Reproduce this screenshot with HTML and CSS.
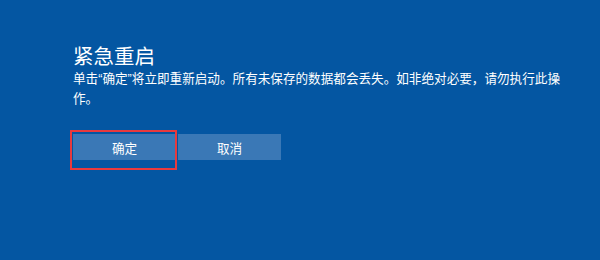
FILE: index.html
```html
<!DOCTYPE html>
<html lang="zh-CN">
<head>
<meta charset="utf-8">
<link rel="stylesheet" href="styles.css">
</head>
<body>
<div class="dialog">
  <h1 class="title">紧急重启</h1>
  <p class="message">单击<span class="q">“</span>确定<span class="q">”</span>将立即重新启动。所有未保存的数据都会丢失。如非绝对必要，请勿执行此操作。</p>
  <div class="actions">
    <div class="btn-wrap">
      <button class="btn">确定</button>
      <span class="highlight"></span>
    </div>
    <button class="btn">取消</button>
  </div>
</div>
</body>
</html>
```

FILE: styles.css
```css
html, body {
  margin: 0;
  padding: 0;
}
body {
  width: 600px;
  height: 260px;
  background: #0456a2;
  font-family: "Noto Sans CJK SC", "Noto Sans", sans-serif;
  color: #ffffff;
  overflow: hidden;
}
.dialog {
  padding: 41px 0 0 73px;
  width: 496px;
}
.title {
  margin: 0;
  font-size: 20.5px;
  font-weight: 400;
  line-height: 28px;
}
.message {
  margin: 0;
  font-size: 12.6px;
  line-height: 17.5px;
}
.q {
  font-family: "Liberation Sans", sans-serif;
}
.actions {
  display: flex;
  gap: 2px;
  margin-top: 28px;
}
.btn-wrap {
  position: relative;
  display: flex;
}
.btn {
  width: 103px;
  height: 26px;
  border: 0;
  margin: 0;
  padding: 0;
  background: #3a78b6;
  color: #ffffff;
  font-family: "Noto Sans CJK SC", sans-serif;
  font-size: 12.6px;
}
.highlight {
  position: absolute;
  left: -3px;
  top: -4px;
  width: 103px;
  height: 36px;
  border: 2px solid #e83a3e;
}
```
